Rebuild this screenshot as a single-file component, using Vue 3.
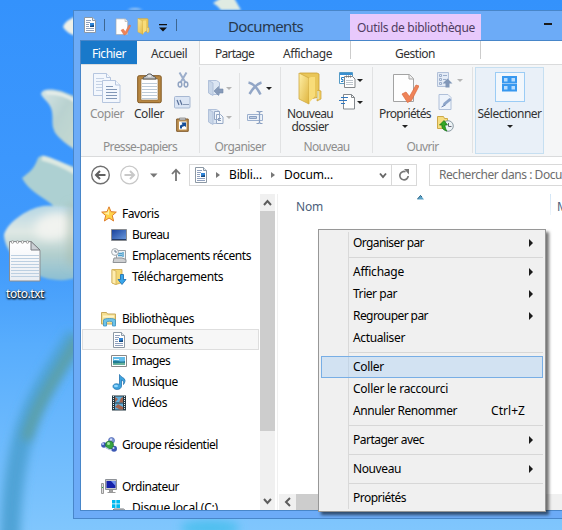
<script setup>
const fit = (el, { value }) => {
  el.style.letterSpacing = '0px'
  const range = document.createRange()
  range.selectNodeContents(el)
  const natural = range.getBoundingClientRect().width
  const count = el.textContent.length
  if (count) el.style.letterSpacing = (value - natural) / count + 'px'
}
const vFit = { mounted: fit }

const tree = [
  { icon: 'star', label: 'Favoris', w: 37, level: 0 },
  { icon: 'desktop', label: 'Bureau', w: 37, level: 1 },
  { icon: 'recent', label: 'Emplacements récents', w: 119, level: 1 },
  { icon: 'download', label: 'Téléchargements', w: 91, level: 1 },
  null,
  { icon: 'library', label: 'Bibliothèques', w: 72, level: 0 },
  { icon: 'doc', label: 'Documents', w: 61, level: 1, selected: true },
  { icon: 'image', label: 'Images', w: 38, level: 1 },
  { icon: 'music', label: 'Musique', w: 46, level: 1 },
  { icon: 'video', label: 'Vidéos', w: 35, level: 1 },
  null,
  { icon: 'group', label: 'Groupe résidentiel', w: 96, level: 0 },
  null,
  { icon: 'computer', label: 'Ordinateur', w: 57, level: 0 },
  { icon: 'disk', label: 'Disque local (C:)', w: 86, level: 1 },
]

const menu = [
  { label: 'Organiser par', w: 71, sub: true },
  null,
  { label: 'Affichage', w: 51, sub: true },
  { label: 'Trier par', w: 44, sub: true },
  { label: 'Regrouper par', w: 75, sub: true },
  { label: 'Actualiser', w: 52 },
  null,
  { label: 'Coller', w: 31, hot: true },
  { label: 'Coller le raccourci', w: 95 },
  { label: 'Annuler Renommer', w: 104, key: 'Ctrl+Z' },
  null,
  { label: 'Partager avec', w: 71, sub: true },
  null,
  { label: 'Nouveau', w: 48, sub: true },
  null,
  { label: 'Propriétés', w: 53 },
]
</script>

<template>
  <div class="desktop">
    <svg class="sprite" width="0" height="0">
      <defs>
        <linearGradient id="gold" x1="0" y1="0" x2="1" y2="1"><stop offset="0" stop-color="#fff0a8" /><stop offset="1" stop-color="#dfb43d" /></linearGradient>
        <linearGradient id="screen" x1="0" y1="0" x2="1" y2="1"><stop offset="0" stop-color="#163f9a" /><stop offset="1" stop-color="#6f9ee0" /></linearGradient>
        <linearGradient id="paper" x1="0" y1="0" x2="0" y2="1"><stop offset="0" stop-color="#fff" /><stop offset="1" stop-color="#e9edf3" /></linearGradient>
      </defs>
      <symbol id="doc" viewBox="0 0 16 16">
        <path d="M2.500 .5h8l3 3v12h-11z" fill="#fff" stroke="#8d99a5" /><path d="M10.500 .5v3h3" fill="#e4eaf0" stroke="#8d99a5" />
        <path d="M4 3.500h5M4 5.500h4M4 7.500h3M4 9.500h3M4 11.500h8M4 13.500h8" stroke="#8fa0bd" />
        <path d="M8 6h4v4H8z" fill="#2f84d8" /><path d="M8 9l4-1v2H8z" fill="#164a80" />
      </symbol>
      <symbol id="check" viewBox="0 0 27 31">
        <path d="M1.500 1.500h16l4 4v23h-20z" fill="#fefefe" stroke="#a3a3a3" /><path d="M17 1.500v4.500h4.500" fill="#eee" stroke="#a3a3a3" />
        <path d="M10 21l4-2 3.500 4.500L24 12l3 1-7.500 14.500-4 2z" fill="#ef8358" stroke="#d9683e" stroke-width=".7" />
      </symbol>
      <symbol id="folder" viewBox="0 0 26 33">
        <path d="M3 1h17l2 1v23l-13 3z" fill="#e9c659" stroke="#c99e34" stroke-width=".8" />
        <path d="M2 1l10 5v26L2 27z" fill="url(#gold)" stroke="#cfa83f" stroke-width=".8" />
        <path d="M12 6l2-1h4v19l-6 7z" fill="#f8dc79" /><path d="M21 18l3 1v8l-4 2z" fill="#f3cf62" stroke="#c99e34" stroke-width=".7" /><path d="M21 19v8" stroke="#d7eef8" />
      </symbol>
      <symbol id="copy" viewBox="0 0 28 31">
        <g fill="#f3f7fd" stroke="#b6c6df"><path d="M.5.500h13l4 4v18H.5z" /><path d="M13.500.500v4h4" /><path d="M9.500 7.500h13l4.500 4.500v17.500H9.500z" /><path d="M22.500 7.500V12H27" /></g>
        <path d="M3 5.500h8M3 8.500h6M3 11.500h6M3 14.500h6M3 17.500h6" stroke="#c5d2e5" /><path d="M13 13.500h7M13 16.500h11M13 19.500h11M13 22.500h11M13 25.500h11" stroke="#8197b7" />
      </symbol>
      <symbol id="paste" viewBox="0 0 25 31">
        <rect x=".7" y="2.700" width="23.500" height="27" rx="1.500" fill="#b78742" stroke="#805720" /><path d="M4 6h17v21H4z" fill="#fff" stroke="#8b6a3b" stroke-width=".6" />
        <path d="M5 10.500h15M5 13.500h15M5 16.500h15M5 19.500h15M5 22.500h15M5 25.500h15" stroke="#bdcbd8" /><path d="M6 6c0-3 3-2 4-4 1-1.500 4-1.500 5 0 1 2 4 1 4 4z" fill="#c4c6c8" stroke="#55585a" /><path d="M11 3h3" stroke="#fff" />
      </symbol>
      <symbol id="cut" viewBox="0 0 12 16"><path d="M2.500.500l6 10M9.500.500l-6 10" stroke="#9caecb" stroke-width="2" /><g fill="none" stroke="#91a4c2" stroke-width="1.500"><ellipse cx="3" cy="12.500" rx="1.800" ry="2.400" /><ellipse cx="9" cy="12.500" rx="1.800" ry="2.400" /></g></symbol>
      <symbol id="path" viewBox="0 0 17 13"><rect x=".5" y=".5" width="15.500" height="11.500" rx="1" fill="#dbe5f4" stroke="#a7b8d2" /><path d="M3 4l2 5M6 4l2 5" stroke="#576f98" stroke-width="1.200" /><path d="M9.500 8.500h1M11.500 8.500h1M13.500 8.500h1" stroke="#344d76" /></symbol>
      <symbol id="shortcut" viewBox="0 0 13 15"><path d="M.7 2h11.500v12.300H.7z" fill="#c29555" stroke="#7d5525" /><path d="M3 4.500h7.500v8H3z" fill="#fff" /><path d="M3.500 3V1h6v2z" fill="#ccc" stroke="#777" stroke-width=".7" /><path d="M4 11.500V8.500l2.500-1.300L5.500 5.500H10v4.500L8.500 9 6 10v1.500z" fill="#174f98" /></symbol>
      <symbol id="moveto" viewBox="0 0 16 16"><path d="M.5.500h8l3 2v12H3l-2.500-2z" fill="#dce6f3" stroke="#b1c1da" /><path d="M.5.500L5 3v12.500L.5 13z" fill="#c9d7e9" stroke="#b1c1da" /><path d="M6 11l4.500-4.500v2.500H15v4h-4.500v2.500z" fill="#869ab9" stroke="#7489a9" stroke-width=".6" /></symbol>
      <symbol id="copyto" viewBox="0 0 16 16"><path d="M.5.500h8l3 2v12H3l-2.500-2z" fill="#dce6f3" stroke="#b1c1da" /><path d="M.5.500L5 3v12.500L.5 13z" fill="#c9d7e9" stroke="#b1c1da" /><path d="M6.500 2.500h5v8h-5zM8.500 5.500h4l2.500 2.500v6.500H8.500z" fill="#f3f7fc" stroke="#95a8c5" /><path d="M10 9.500h3M10 11.500h3" stroke="#879bba" /></symbol>
      <symbol id="delete" viewBox="0 0 16 15"><path d="M1 1.500c5 1 9 6 12 12M14 1.500C9 3 5 8 2 13" fill="none" stroke="#92a6c6" stroke-width="2.500" /></symbol>
      <symbol id="rename" viewBox="0 0 17 13"><path d="M.5 3.500h15v6H.5z" fill="#eef3fa" stroke="#9cb0ce" /><path d="M2.500 5.500h7v2h-7z" fill="#c0cee3" stroke="#899fc1" /><path d="M9.500.500h2l1 1 1-1h2M12.500 1v11M9.500 12.500h2l1-1 1 1h2" fill="none" stroke="#899fc1" stroke-width="1.200" /></symbol>
      <symbol id="newitem" viewBox="0 0 17 16"><path d="M.5.500h13v11H.5z" fill="#fff" stroke="#559bc6" /><path d="M1 1h12v2H1z" fill="#3a8fd0" /><path d="M5 5.500H2.500v2H4v2H2" fill="none" stroke="#2480c4" /><path d="M5.500 4.500h8l2.500 2.500v8.500H5.500z" fill="#fff" stroke="#83868a" /><path d="M7.500 3.500v2M9.500 3.500v2M11.500 3.500v2" stroke="#777" /><path d="M7 8.500h7M7 10.500h7M7 12.500h7" stroke="#bcc4cc" /></symbol>
      <symbol id="easy" viewBox="0 0 17 16"><path d="M4.500.500h8l3 3v11.500h-11z" fill="#fff" stroke="#83888d" /><path d="M12.500 .5v3h3" fill="none" stroke="#83888d" /><path d="M2 3.500h7M0 6.500h8M2 9.500h4" stroke="#3077bf" stroke-width="1.200" /></symbol>
      <symbol id="open" viewBox="0 0 16 16"><path d="M.5.500h11v14H.5z" fill="#e3ebf6" stroke="#b2c1d9" /><path d="M2.500 2.500h2v2h-2zM2.500 6.500h2v2h-2zM2.500 10.500h2v2h-2zM6 3.500h4M6 7.500h3" fill="none" stroke="#9aadca" /><path d="M10.500 6.500l5 5h-3v4h-4v-4h-3z" fill="#8197b8" /></symbol>
      <symbol id="edit" viewBox="0 0 15 16"><path d="M1.500.500h9l3 3v12h-12z" fill="#edf3fb" stroke="#b0c0d9" /><path d="M5 12l1-3 6-5 2 2-6 5z" fill="#8da5ca" /><path d="M4 13l4-2" stroke="#7189b2" /></symbol>
      <symbol id="history" viewBox="0 0 17 16"><path d="M.5.500h6l1 2h3v10h-10z" fill="#f6dd80" stroke="#cda949" /><circle cx="11" cy="10" r="5.300" fill="#edf3f5" stroke="#8c9ca6" /><path d="M11.500 7v3.500h3" fill="none" stroke="#667" /><path d="M10 15C6 14 4.500 12 5 9H2.500L7 4.500 10.500 9H8c0 2 .5 4 2 6z" fill="#36a626" stroke="#13770e" stroke-width=".7" /></symbol>
      <symbol id="star" viewBox="0 0 16 16"><path d="M8 .8l2 4.900 5.300.4-4 3.500 1.300 5.400L8 12l-4.600 3 1.300-5.400-4-3.500L6 5.700z" fill="#ffd34b" stroke="#df7e2b" /><path d="M8 2.500L6.500 6.500l-4 .4L8 9z" fill="#fff0a5" /></symbol>
      <symbol id="desktop" viewBox="0 0 16 16"><path d="M.5 2.500h15v11H.5z" fill="url(#screen)" stroke="#898c91" /><path d="M1 12.500h14" stroke="#213b6a" /></symbol>
      <symbol id="recent" viewBox="0 0 16 16"><path d="M5.500 2.500h9v9h-9z" fill="#eef2f5" stroke="#9ca1a6" /><path d="M7 5.500h4M7 7.500h4M12 4v5" stroke="#4ca0ce" stroke-width="1.400" /><path d="M3 10h8l4 1.500v3H2z" fill="#cdcfd1" stroke="#8f9397" /><circle cx="4" cy="4" r="3.400" fill="#f7f9fb" stroke="#a5abb0" /><path d="M4 2v2h2" fill="none" stroke="#678" /></symbol>
      <symbol id="download" viewBox="0 0 16 16"><path d="M1 .5h10v13L5 15.500 1 14z" fill="#f4d875" stroke="#cda647" stroke-width=".8" /><path d="M1 .5L5 2v13.500L1 14z" fill="#ffedaf" stroke="#d1b15c" stroke-width=".8" /><path d="M9.500 5.500h3v5H15L11 15.500l-4-5h2.500z" fill="#39a7ec" stroke="#166aaf" stroke-width=".8" /></symbol>
      <symbol id="library" viewBox="0 0 16 16"><path d="M.5 13V1.500h5l1 1.500h8v10z" fill="#f5df91" stroke="#c8a95a" /><path d="M2 5.500h11" stroke="#fff4c7" stroke-width="2" /><path d="M2.500 15V9c0-2 12-2 12 0v6h-3v-4c-1-1-5-1-6 0v4z" fill="#6cc3ea" stroke="#3e91bf" stroke-width=".8" /></symbol>
      <symbol id="image" viewBox="0 0 16 16"><path d="M.5 2.500h15v11H.5z" fill="#fff" stroke="#888" /><path d="M2 4h12v8H2z" fill="#64bcea" /><path d="M2 8c4-2 7 2 12 0v4H2z" fill="#207b94" /><path d="M2 10c4 1 8-1 12 0v2H2z" fill="#68b29c" /><path d="M3 6.500h5" stroke="#e8f9ff" /></symbol>
      <symbol id="music" viewBox="0 0 16 16"><path d="M8.500 .5c1 3 5.500 3 5.500 6 0 2-1 3-1.500 4 .5-3-.5-4-2-4.500v6C10 17 2 16 2 12.500 2 10 5 9 8.500 10.500z" fill="#3da3df" stroke="#2774af" stroke-width=".8" /><ellipse cx="5" cy="12" rx="2" ry="1.200" fill="#91d7ff" /></symbol>
      <symbol id="video" viewBox="0 0 16 16"><path d="M1 .5h14v15H1z" fill="#253842" /><path d="M4 1.500h8v6H4zM4 8.500h8v6H4z" fill="#62afdc" /><path d="M4 2l3 2-3 3.500zM8 7.500L10 3l2-1v5.500zM4 12l3-3 5 3v2.500H9z" fill="#a56650" /><path d="M2.500 1v14M13.500 1v14" stroke="#e5eef0" stroke-dasharray="1 1" /></symbol>
      <symbol id="group" viewBox="0 0 16 16"><circle cx="10.500" cy="3.500" r="3" fill="#8299d8" stroke="#4560af" stroke-width=".7" /><circle cx="3" cy="8" r="2.800" fill="#3c58b4" /><circle cx="13" cy="11.800" r="3" fill="#3c58b4" /><circle cx="8.500" cy="8" r="4" fill="#38a443" stroke="#236c35" stroke-width=".7" /><path d="M4 10l4 2.500 3 .5" fill="none" stroke="#b9c6e8" stroke-width="1.200" /><circle cx="7.500" cy="6.500" r="1.500" fill="#a7e9a3" /><circle cx="2" cy="7" r="1" fill="#c8d4ff" /><circle cx="12.500" cy="11" r="1" fill="#c8d4ff" /><circle cx="10" cy="2.500" r="1" fill="#dce7ff" /></symbol>
      <symbol id="computer" viewBox="0 0 16 16"><path d="M4.500 .5h11v10h-11z" fill="#c6c9cd" stroke="#8e9298" /><path d="M5.500 2h9v7h-9z" fill="#1421aa" /><path d="M10 2h4.500v5z" fill="#6f90ed" /><path d="M8.500 11h3v2h-3zM6.500 13.500h8" fill="#aaa" stroke="#999" /><path d="M.5 4.500h2v10h-2z" fill="#ddd" stroke="#999" /><path d="M1 8.500h1" stroke="#23b634" /></symbol>
      <symbol id="disk" viewBox="0 0 16 16"><path d="M1 0h3.500v3.500H1zM5.300 0H9v3.500H5.300zM1 4.300h3.500V8H1zM5.300 4.300H9V8H5.300z" fill="#00b9ef" /><path d="M1 11.500l2-2.500h9.500l3 2.500V15H1z" fill="#c5c8cb" stroke="#74797e" /><path d="M2 11.500h13" stroke="#eee" /></symbol>
    </svg>

    <svg class="wallpaper" viewBox="0 0 562 530">
      <defs>
        <linearGradient id="sky" x1="0" y1="0" x2="0" y2="1"><stop offset="0" stop-color="#3492fc" /><stop offset=".3" stop-color="#3c97fd" /><stop offset=".5" stop-color="#429bfb" /><stop offset=".65" stop-color="#58adfd" /><stop offset="1" stop-color="#80c6fd" /></linearGradient>
        <linearGradient id="petal" x1="0" y1="0" x2="1" y2="1"><stop offset="0" stop-color="#d5e5e6" /><stop offset=".45" stop-color="#b9d2d0" /><stop offset="1" stop-color="#c8dbd2" /></linearGradient>
        <linearGradient id="bloom" x1="0" y1="0" x2="0" y2="1"><stop offset="0" stop-color="#b4d6e4" /><stop offset=".35" stop-color="#dfe8e4" /><stop offset=".65" stop-color="#b3cfce" /><stop offset="1" stop-color="#8cbfd3" /></linearGradient>
        <filter id="soft" filterUnits="userSpaceOnUse" x="-20" y="-20" width="600" height="570"><feGaussianBlur stdDeviation="1.300" /></filter>
        <filter id="softer" filterUnits="userSpaceOnUse" x="-40" y="-40" width="640" height="620"><feGaussianBlur stdDeviation="5" /></filter>
      </defs>
      <path d="M0 0h562v530H0z" fill="url(#sky)" />
      <path d="M76 335C40 395 12 420 10 545" fill="none" stroke="#4fa3d6" stroke-width="20" filter="url(#softer)" />
      <path d="M80 336C52 385 38 400 26 440" fill="none" stroke="#639f8f" stroke-width="9" opacity=".75" filter="url(#softer)" />
      <g filter="url(#soft)">
        <path d="M63 27q2-7 14-11v20q-10-2-14-9z" fill="#edf0e8" />
        <path d="M41 94c1-6 12-5 20-3l18 7v54c-9-5-24-16-25-22-3-6 0-14-3-22-3-7-8-9-10-14z" fill="url(#petal)" />
        <path d="M46 93q16-1 29 8" fill="none" stroke="#e7eeea" stroke-width="3" />
        <path d="M22 178c7-6 12-8 16-20 4-5 12-1 17 2l22 8v60c-12-7-17-17-27-25-9-7-21-12-28-25z" fill="#add0d2" />
        <path d="M42 158q16 4 33 14" fill="none" stroke="#dde9e2" stroke-width="5" />
        <path d="M4 235c3-12 22-26 39-29 12-1 23 1 34 2v69c-8 4-21 4-32 1-16-5-40-22-41-43z" fill="url(#bloom)" />
        <path d="M213 3l8-5h13l7 12h-20q-3-4-8-7z" fill="#e0ebe2" /><path d="M127 10q8-4 16 0z" fill="#abcdf0" />
      </g>
      <ellipse cx="54" cy="226" rx="20" ry="13" fill="#f1f3ef" filter="url(#softer)" transform="rotate(-14 54 226)" />
      <path d="M72 205v60" stroke="#a6b9aa" stroke-width="5" filter="url(#softer)" />
      <ellipse cx="210" cy="528" rx="30" ry="8" fill="#4fc0ef" filter="url(#softer)" />
    </svg>

    <div class="shortcut-file">
      <svg width="34" height="44" viewBox="0 0 34 44">
        <path d="M1.500 2.500H23l9 9V42H1.500z" fill="url(#paper)" stroke="#8a8d91" /><path d="M23 2.500v8.500h9z" fill="#ccd0d5" stroke="#777b80" />
        <path d="M3 16.500h28M3 19.500h28M3 22.500h28M3 25.500h28M3 28.500h28M3 31.500h28M3 34.500h28M3 37.500h28" stroke="#bccfe1" />
        <g fill="#fff" stroke="#8c8c8c" stroke-width=".8"><circle cx="4.500" cy="3" r="1.300" /><circle cx="9.500" cy="3" r="1.300" /><circle cx="14.500" cy="3" r="1.300" /><circle cx="19.500" cy="3" r="1.300" /></g>
      </svg>
      <span v-fit="38">toto.txt</span>
    </div>

    <section class="window">
      <header class="titlebar">
        <svg class="q-doc" width="16" height="16"><use href="#doc" /></svg><i class="bar b1"></i>
        <svg class="q-check" width="16" height="18"><use href="#check" /></svg>
        <svg class="q-folder" width="15" height="17"><use href="#folder" /></svg>
        <svg class="q-caret" width="8" height="8"><path d="M0 0h8v1.200H0zM0 3.500h8L4 7.500z" fill="#111" /></svg><i class="bar b2"></i>
        <span class="title" v-fit="75">Documents</span>
        <div class="context"><span v-fit="118">Outils de bibliothèque</span></div>
        <i class="minimise"></i>
      </header>

      <div class="client">
        <nav class="tabs">
          <div class="tab file"><span v-fit="34">Fichier</span></div>
          <div class="tab home"><span v-fit="36">Accueil</span></div>
          <div class="tab share"><span v-fit="39">Partage</span></div>
          <div class="tab view"><span v-fit="49">Affichage</span></div>
          <div class="tab manage"><span v-fit="40">Gestion</span></div>
        </nav>

        <div class="ribbon">
          <div class="group clip">
            <div class="tools">
              <div class="big muted"><svg width="28" height="31"><use href="#copy" /></svg><span v-fit="34">Copier</span></div>
              <div class="big"><svg width="25" height="31"><use href="#paste" /></svg><span v-fit="30">Coller</span></div>
              <div class="stack"><svg width="12" height="16"><use href="#cut" /></svg><svg class="s2" width="17" height="13"><use href="#path" /></svg><svg class="s3" width="13" height="15"><use href="#shortcut" /></svg></div>
            </div>
            <div class="caption"><span v-fit="74">Presse-papiers</span></div>
          </div>
          <div class="group org">
            <div class="tools">
              <div class="pair"><p><svg width="16" height="16"><use href="#moveto" /></svg><i class="caret dim"></i></p><p><svg width="16" height="16"><use href="#copyto" /></svg><i class="caret dim"></i></p></div>
              <i class="rule"></i>
              <div class="pair"><p><svg width="17" height="15"><use href="#delete" /></svg><i class="caret"></i></p><p><svg width="17" height="13"><use href="#rename" /></svg></p></div>
            </div>
            <div class="caption"><span v-fit="51">Organiser</span></div>
          </div>
          <div class="group new">
            <div class="tools">
              <div class="big"><svg width="26" height="33"><use href="#folder" /></svg><span v-fit="46">Nouveau</span><span v-fit="37">dossier</span></div>
              <div class="rows"><p><svg width="17" height="16"><use href="#newitem" /></svg><i class="caret"></i></p><p><svg width="17" height="16"><use href="#easy" /></svg><i class="caret"></i></p></div>
            </div>
            <div class="caption"><span v-fit="46">Nouveau</span></div>
          </div>
          <div class="group opn">
            <div class="tools">
              <div class="big"><svg width="27" height="31"><use href="#check" /></svg><span v-fit="52">Propriétés</span><i class="caret"></i></div>
              <div class="rows"><p><svg width="16" height="16"><use href="#open" /></svg><i class="caret dim"></i></p><p><svg width="16" height="16"><use href="#edit" /></svg></p><p><svg width="17" height="16"><use href="#history" /></svg></p></div>
            </div>
            <div class="caption"><span v-fit="32">Ouvrir</span></div>
          </div>
          <div class="select">
            <div class="frame"><svg width="15" height="16"><path d="M1 1h5.500v5.500H1zM8.500 1H14v5.500H8.500zM1 9h5.500v5.500H1zM8.500 9H14v5.500H8.500z" fill="#b6dcff" stroke="#3798ef" stroke-width="2" /></svg></div>
            <span v-fit="64">Sélectionner</span><i class="caret"></i>
          </div>
        </div>

        <div class="address-row">
          <svg class="arrows" width="108" height="22" fill="none">
            <circle cx="19.500" cy="11" r="8.800" stroke="#707070" stroke-width="1.400" /><path d="M24.500 11h-9M19 7l-4 4 4 4" stroke="#606060" stroke-width="2" />
            <circle cx="48.500" cy="11" r="8.800" stroke="#c8c8c8" stroke-width="1.200" /><path d="M43.500 11h9M49 7l4 4-4 4" stroke="#c8c8c8" stroke-width="2" />
            <path d="M69 9.500h7.500l-3.700 4z" fill="#777" /><path d="M95 17V6M91 10l4-4.300L99 10" stroke="#757575" stroke-width="1.800" />
          </svg>
          <div class="address">
            <svg class="a-doc" width="16" height="16"><use href="#doc" /></svg>
            <i class="tri t1"></i><span v-fit="33">Bibli...</span><i class="tri t2"></i><span v-fit="49">Docum...</span>
            <svg class="a-chev" width="8" height="7"><path d="M1 1.500L4 5l3-3.500" fill="none" stroke="#666" stroke-width="1.900" /></svg>
            <div class="refresh"><svg width="12" height="13"><path d="M7.500 2.700A4.200 4.200 0 1 0 10.200 7" fill="none" stroke="#777" stroke-width="1.700" /><path d="M6 0h5v5.500z" fill="#777" /></svg></div>
          </div>
          <div class="search"><span v-fit="123">Rechercher dans : Docu</span></div>
        </div>

        <main class="body">
          <aside class="tree">
            <div v-for="(n, i) in tree" :key="i" class="node" :class="n && { child: n.level, selected: n.selected }">
              <template v-if="n"><svg width="16" height="16"><use :href="'#' + n.icon" /></svg><span v-fit="n.w">{{ n.label }}</span></template>
            </div>
          </aside>
          <div class="vscroll">
            <svg width="15" height="17"><path d="M4 11l3.500-4 3.500 4" fill="none" stroke="#5d5d5d" stroke-width="2" /></svg>
            <div class="thumb"></div>
            <svg class="down" width="15" height="17"><path d="M4 6l3.500 4L11 6" fill="none" stroke="#5d5d5d" stroke-width="2" /></svg>
          </div>
          <section class="list">
            <div class="columns"><span v-fit="27">Nom</span><svg width="7" height="5"><path d="M0 4.500L3.500 0 7 4.500z" fill="#5ba2c7" /><path d="M.5 4L3.500 .5 5 2" fill="none" stroke="#326887" /></svg><i></i><span class="mod">M</span></div>
            <div class="hscroll"><svg width="17" height="16"><path d="M11 4L7 8l4 4" fill="none" stroke="#5d5d5d" stroke-width="2" /></svg><div class="hthumb"></div></div>
          </section>
        </main>
      </div>
    </section>

    <div class="menu">
      <template v-for="(m, i) in menu" :key="i">
        <div v-if="m" class="item" :class="{ hot: m.hot }"><span v-fit="m.w">{{ m.label }}</span><span v-if="m.key" class="key" v-fit="34">{{ m.key }}</span><i v-if="m.sub" class="sub"></i></div>
        <div v-else class="sep"></div>
      </template>
    </div>
  </div>
</template>

<style>
body { margin: 0; overflow: hidden; }
</style>
<style scoped>
.desktop { position: relative; width: 562px; height: 530px; overflow: hidden; font: 12px/16px "Noto Sans", "Open Sans", sans-serif; color: #000; white-space: nowrap; }
.desktop * { box-sizing: border-box; }
svg { display: block; flex: none; }
i { display: block; flex: none; }
p { margin: 0; }
.sprite { position: absolute; }
.wallpaper { position: absolute; inset: 0; width: 562px; height: 530px; }
.shortcut-file { position: absolute; left: 6px; top: 239px; width: 38px; display: flex; flex-direction: column; align-items: center; gap: 3px; color: #fff; text-shadow: 0 1px 2px #000, 1px 1px 2px #000; }
.window { position: absolute; left: 73px; top: 10px; width: 510px; height: 509px; background: #6cabf7; border: 1px solid #4886c9; padding: 0 0 7px 6px; display: flex; flex-direction: column; }
.titlebar { height: 29px; flex: none; display: flex; align-items: flex-start; }
.q-doc { margin: 6px 0 0 2px; }
.bar { width: 1px; height: 12px; background: #3d6691; margin-top: 8px; }
.b1 { margin-left: 6px; }
.q-check { margin: 7px 0 0 10px; }
.q-folder { margin: 7px 0 0 5px; }
.q-caret { margin: 13px 0 0 8px; }
.b2 { margin-left: 9px; }
.title { width: 75px; margin: 5px 0 0 51px; font-size: 15px; line-height: 20px; color: #27394d; }
.context { width: 131px; height: 27px; margin: 3px 0 0 47px; padding: 6px 0 0 7px; background: #e8c9fc; color: #4f3c60; }
.minimise { width: 8px; height: 2px; margin: 12px 0 0 63px; background: #1a1a1a; }
.client { flex: 1; min-height: 0; border: solid #4886c9; border-width: 1px 0 1px 1px; background: #fff; display: flex; flex-direction: column; }
.tabs { height: 24px; flex: none; display: flex; border-bottom: 1px solid #dadbdc; color: #333; line-height: 25px; }
.tab { height: 23px; }
.file { width: 56px; padding-left: 11px; background: #1979ca; color: #fff; }
.home { width: 63px; height: 24px; padding-left: 14px; background: #f5f6f7; border-right: 1px solid #dadbdc; }
.share { width: 68px; padding-left: 15px; }
.view { width: 82px; padding-left: 15px; }
.manage { width: 131px; height: 18px; padding-left: 44px; border: solid #ccc; border-width: 0 1px; }
.ribbon { height: 92px; flex: none; display: flex; background: #f5f6f7; border-bottom: 1px solid #dadbdc; color: #333; }
.group { height: 86px; margin-top: 2px; border-right: 1px solid #e1e2e3; display: flex; flex-direction: column; }
.tools { display: flex; height: 72px; flex: none; }
.caption { color: #8e8e8e; text-align: center; }
.clip { width: 119px; }
.org { width: 81px; }
.new { width: 92px; }
.opn { width: 100px; }
.big { display: flex; flex-direction: column; align-items: center; padding-top: 5px; line-height: 13px; }
.big svg { height: 33px; }
.big span { margin-top: 2px; }
.big span + span { margin-top: 0; }
.big .caret { margin-top: 5px; }
.muted { color: #8e8e8e; }
.clip .big { width: 34px; margin-left: 9px; }
.clip .big + .big { margin-left: 8px; }
.stack { padding: 5px 0 0 8px; display: flex; flex-direction: column; align-items: center; }
.s2 { margin-top: 8px; }
.s3 { margin-top: 8px; }
.caret { width: 0; height: 0; border: solid transparent; border-width: 3px 3px 0; border-top-color: #222; }
.dim { border-top-color: #b5b5b5; }
.pair { display: flex; flex-direction: column; padding-top: 13px; gap: 13px; }
.pair p, .rows p { display: flex; align-items: center; gap: 2px; height: 16px; }
.org .pair { padding-left: 8px; }
.rule { width: 1px; height: 56px; margin: 6px 0 0 7px; background: #e1e2e3; }
.org .rule + .pair { padding-left: 7px; }
.rows { display: flex; flex-direction: column; padding-top: 5px; gap: 6px; }
.new .big { width: 46px; margin-left: 6px; }
.new .rows { margin-left: 6px; }
.new .rows p { gap: 1px; }
.opn .big { width: 52px; margin-left: 6px; }
.opn .rows { margin-left: 6px; }
.opn .rows p { gap: 4px; }
.select { width: 69px; height: 87px; margin: 2px 0 0 2px; border: 1px solid #c6dff1; background: #e9f0f8; display: flex; flex-direction: column; align-items: center; }
.frame { width: 30px; height: 30px; margin: 4px 0 4px; border: 1px solid #9bccf5; background: #f2f7fc; display: flex; justify-content: center; padding-top: 3px; }
.select .caret { margin-top: 3px; }
.address-row { height: 37px; flex: none; display: flex; padding-top: 7px; }
.address { width: 228px; height: 22px; border: 1px solid #d9d9d9; display: flex; align-items: center; line-height: 20px; }
.a-doc { margin: 0 0 0 3px; }
.tri { width: 0; height: 0; border: solid transparent; border-width: 3.500px 0 3.500px 4px; border-left-color: #777; }
.t1 { margin: 0 9px 0 7px; }
.t2 { margin: 0 9px; }
.a-chev { margin-left: auto; margin-right: 4px; }
.refresh { width: 25px; height: 20px; border-left: 1px solid #d9d9d9; display: flex; align-items: center; justify-content: center; }
.search { width: 150px; height: 22px; margin-left: 12px; border: 1px solid #d9d9d9; padding-left: 9px; line-height: 20px; color: #6d6d6d; }
.body { flex: 1; min-height: 0; display: flex; }
.tree { width: 179px; padding-top: 9px; overflow: hidden; }
.node { height: 21px; display: flex; align-items: center; gap: 5px; padding-left: 20px; }
.child { padding-left: 30px; }
.selected { margin: 0 1px; padding-left: 28px; border: 1px solid #dedede; background: #f7f7f7; }
.vscroll { width: 15px; background: #f0f0f0; display: flex; flex-direction: column; }
.thumb { height: 220px; background: #cdcdcd; }
.down { margin-top: auto; }
.list { flex: 1; margin-left: 2px; border-left: 1px solid #f0f0f0; display: flex; flex-direction: column; justify-content: space-between; }
.columns { height: 24px; display: flex; padding-left: 18px; line-height: 25px; color: #4c607a; }
.columns svg { margin: 1px 0 0 94px; }
.columns i { width: 1px; height: 21px; margin: 0 6px 0 126px; background: linear-gradient(#d2e5f6, #edf5fc); }
.hscroll { height: 16px; margin-left: 1px; background: #f0f0f0; display: flex; }
.hthumb { width: 120px; background: #cdcdcd; }
.menu { position: absolute; left: 318px; top: 229px; width: 228px; height: 283px; padding: 2px; border: 1px solid #979797; background: linear-gradient(90deg, transparent 27px, #d9d9d9 27px, #d9d9d9 28px, transparent 28px) 2px 2px / 100% 277px no-repeat #f0f0f0; box-shadow: 3px 3px 3px rgba(0, 0, 0, .55); }
.item { height: 22px; padding-left: 32px; display: flex; align-items: center; }
.hot { padding-left: 31px; border: 1px solid #78aee5; background: rgba(173, 209, 243, .45); }
.sep { height: 7px; margin-left: 28px; border-bottom: 3px solid #f0f0f0; border-top: 3px solid #f0f0f0; background: #d7d7d7; }
.key { margin-left: 34px; }
.sub { width: 0; height: 0; border: solid transparent; border-width: 4px 0 4px 4px; border-left-color: #1b1b1b; margin-left: auto; margin-right: 10px; }
</style>
